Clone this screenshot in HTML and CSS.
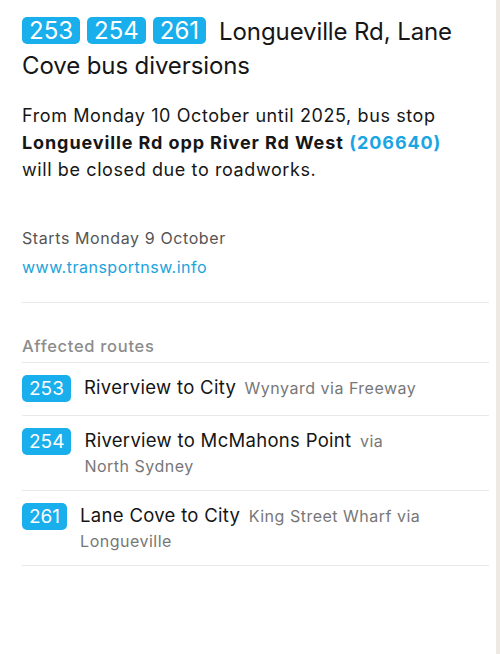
FILE: index.html
```html
<!DOCTYPE html>
<html lang="en">
<head>
    <meta charset="UTF-8">
    <title>Longueville Rd, Lane Cove bus diversions</title>
    <link rel="stylesheet" href="styles.css">
</head>
<body>

<div class="screen">
    <div class="sheet">
        <h1 class="title"><span class="badge">253</span><span class="badge">254</span><span class="badge last">261</span><span class="title_text">Longueville Rd, Lane Cove bus diversions</span></h1>

        <p class="desc">From Monday 10 October until 2025, bus stop <b>Longueville Rd opp River Rd West</b> <span class="stop">(206640)</span> will be closed due to roadworks.</p>

        <div class="meta">
            <div class="starts">Starts Monday 9 October</div>
            <a class="link" href="#">www.transportnsw.info</a>
        </div>

        <div class="routes">
            <div class="routes_head">Affected routes</div>

            <div class="route">
                <span class="route_badge">253</span>
                <div class="route_text"><span class="route_name">Riverview to City</span> <span class="route_via">Wynyard via Freeway</span></div>
            </div>
            <div class="route">
                <span class="route_badge">254</span>
                <div class="route_text"><span class="route_name">Riverview to McMahons Point</span> <span class="route_via">via North Sydney</span></div>
            </div>
            <div class="route">
                <span class="route_badge">261</span>
                <div class="route_text"><span class="route_name">Lane Cove to City</span> <span class="route_via">King Street Wharf via Longueville</span></div>
            </div>
        </div>
    </div>
    <div class="edge"></div>
</div>

</body>
</html>
```

FILE: styles.css
```css
html, body {
    margin: 0;
    padding: 0;
    height: 100%;
}
body {
    font-family: "Inter", "Noto Sans", sans-serif;
    color: #161616;
    background-color: #fff;
}
.screen {
    display: flex;
    min-height: 100%;
}
.sheet {
    flex: 1;
    padding: 15px 7px 0 22px;
    background-color: #fff;
}
.edge {
    width: 4px;
    background-color: #eee9e2;
}

/* title */
.title {
    margin: 0;
    font-size: 24px;
    font-weight: 400;
    line-height: 34px;
    letter-spacing: -0.1px;
}
.badge {
    display: inline-block;
    padding: 1px 7px 0;
    margin-right: 7px;
    height: 26px;
    line-height: 26px;
    border-radius: 5px;
    background-color: #19aeec;
    color: #fff;
    font-size: 24px;
    letter-spacing: 0;
    vertical-align: 1px;
}
.badge.last {
    margin-right: 13px;
}

/* description */
.desc {
    max-width: 435px;
    margin: 19px 0 0;
    font-size: 18px;
    line-height: 27px;
    letter-spacing: 0.6px;
}
.desc b {
    font-weight: 700;
    letter-spacing: 0.9px;
}
.stop {
    color: #1aa6e2;
    font-weight: 700;
    letter-spacing: 0.9px;
}

.meta {
    margin-top: 41px;
    padding-bottom: 20px;
    border-bottom: 1px solid #e9e9e9;
    font-size: 16px;
    line-height: 29px;
}
.starts {
    color: #555;
    letter-spacing: 0.6px;
}
.link {
    color: #1aa3dc;
    text-decoration: none;
    letter-spacing: 0.5px;
}

/* routes */
.routes_head {
    padding: 31px 0 4px;
    border-bottom: 1px solid #e9e9e9;
    font-size: 16.5px;
    font-weight: 500;
    line-height: 24px;
    letter-spacing: 0.7px;
    color: #8c8c8c;
}
.route {
    display: flex;
    align-items: flex-start;
    gap: 13px;
    padding: 12px 0 11px;
    border-bottom: 1px solid #e9e9e9;
}
.route_badge {
    flex-shrink: 0;
    height: 27px;
    margin-bottom: 2px;
    padding: 0 7px;
    line-height: 28px;
    border-radius: 5px;
    background-color: #19aeec;
    color: #fff;
    font-size: 19px;
}
.route_text {
    max-width: 343px;
    line-height: 25px;
}
.route_name {
    font-size: 18.5px;
    color: #151515;
    letter-spacing: 0.3px;
    margin-right: 4px;
}
.route_via {
    font-size: 16px;
    color: #777;
    letter-spacing: 0.5px;
}
```
